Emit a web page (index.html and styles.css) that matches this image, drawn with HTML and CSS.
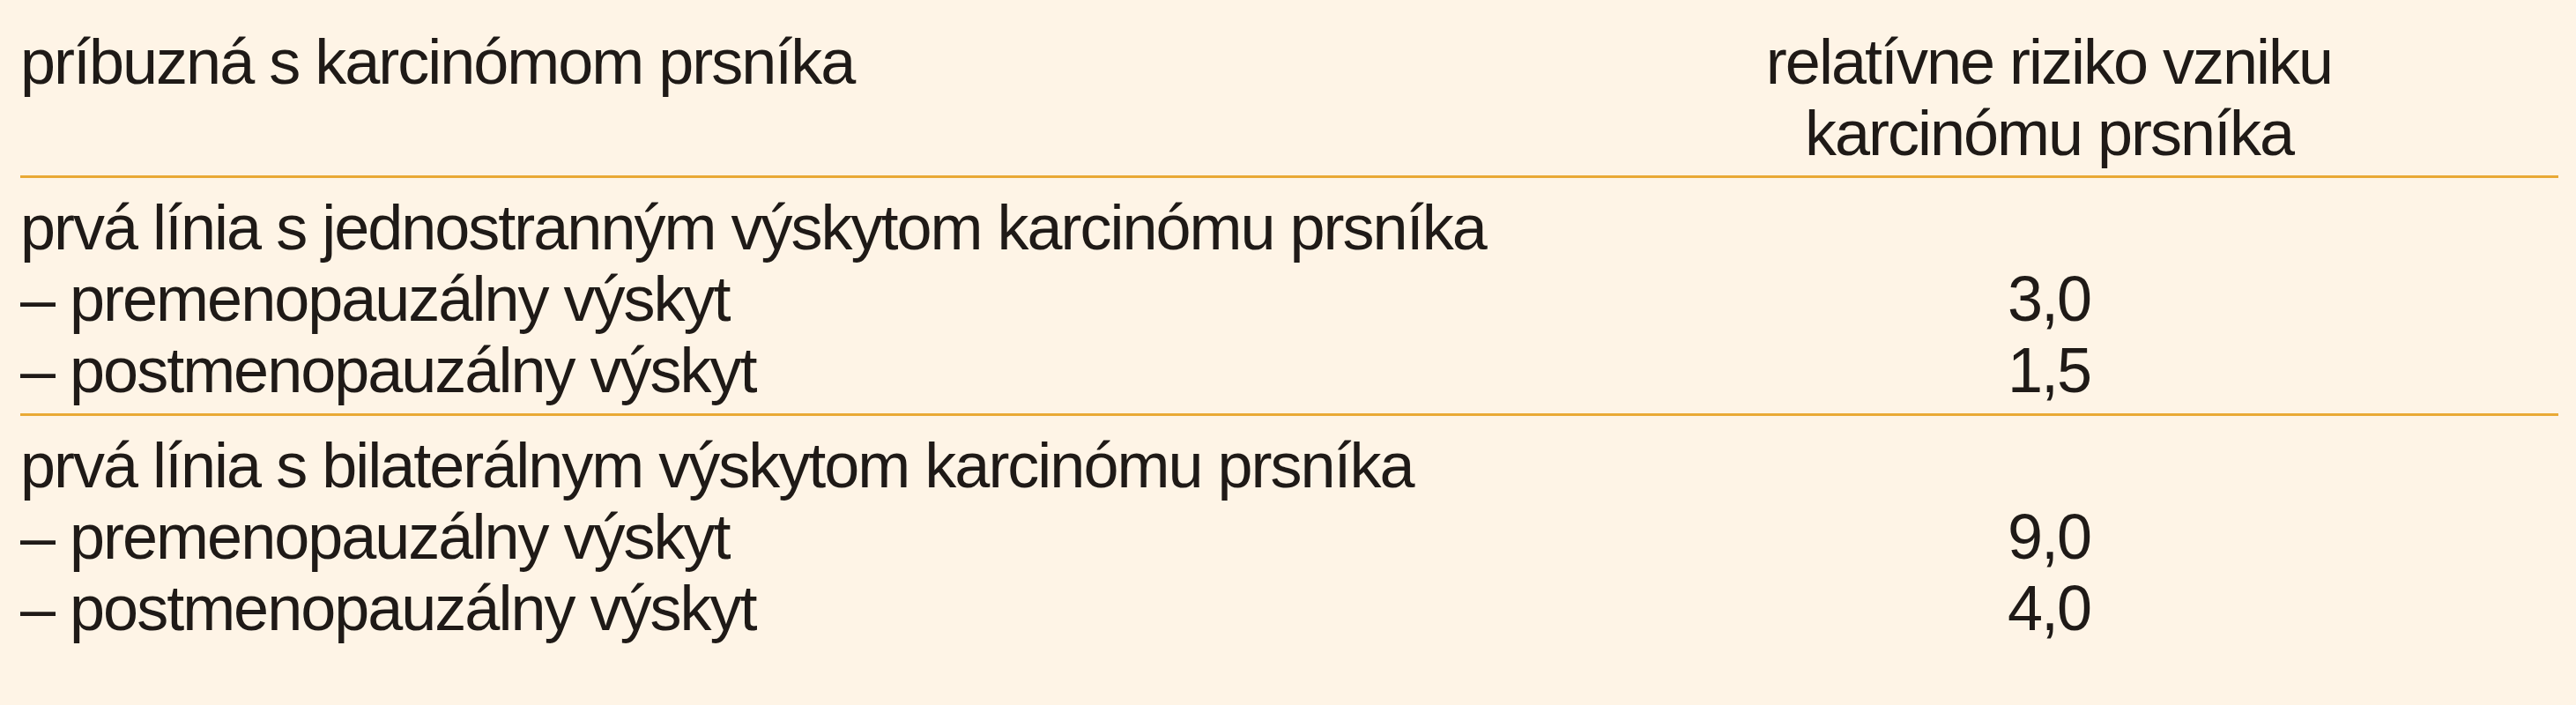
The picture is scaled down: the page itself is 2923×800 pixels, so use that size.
FILE: index.html
```html
<!DOCTYPE html>
<html lang="sk">
<head>
<meta charset="utf-8">
<title>Relatívne riziko</title>
<link rel="stylesheet" href="styles.css">
</head>
<body>
<div class="table">
  <div class="row head">
    <div class="c1">príbuzná s karcinómom prsníka</div>
    <div class="c2">relatívne riziko vzniku<br>karcinómu prsníka</div>
  </div>
  <div class="group">
    <div class="row"><div class="c1">prvá línia s jednostranným výskytom karcinómu prsníka</div><div class="c2"></div></div>
    <div class="row"><div class="c1">– premenopauzálny výskyt</div><div class="c2">3,0</div></div>
    <div class="row"><div class="c1">– postmenopauzálny výskyt</div><div class="c2">1,5</div></div>
  </div>
  <div class="group last">
    <div class="row"><div class="c1">prvá línia s bilaterálnym výskytom karcinómu prsníka</div><div class="c2"></div></div>
    <div class="row"><div class="c1">– premenopauzálny výskyt</div><div class="c2">9,0</div></div>
    <div class="row"><div class="c1">– postmenopauzálny výskyt</div><div class="c2">4,0</div></div>
  </div>
</div>
</body>
</html>
```
FILE: styles.css
```css
html, body {
  margin: 0;
  padding: 0;
  background: #fef4e6;
}
body {
  width: 2923px;
  height: 800px;
  overflow: hidden;
  font-family: "Liberation Sans", Arial, sans-serif;
  font-size: 72px;
  line-height: 81px;
  letter-spacing: -2px;
  color: #1f1a17;
}
.table {
  padding: 30px 20px 0 23px;
}
.row {
  display: grid;
  grid-template-columns: 1fr 1156px;
}
.c2 {
  text-align: center;
}
.head {
  padding-bottom: 7px;
  border-bottom: 3px solid #e9a935;
}
.group {
  padding: 16px 0 8px;
  border-bottom: 3px solid #e9a935;
}
.group.last {
  border-bottom: none;
}
```
